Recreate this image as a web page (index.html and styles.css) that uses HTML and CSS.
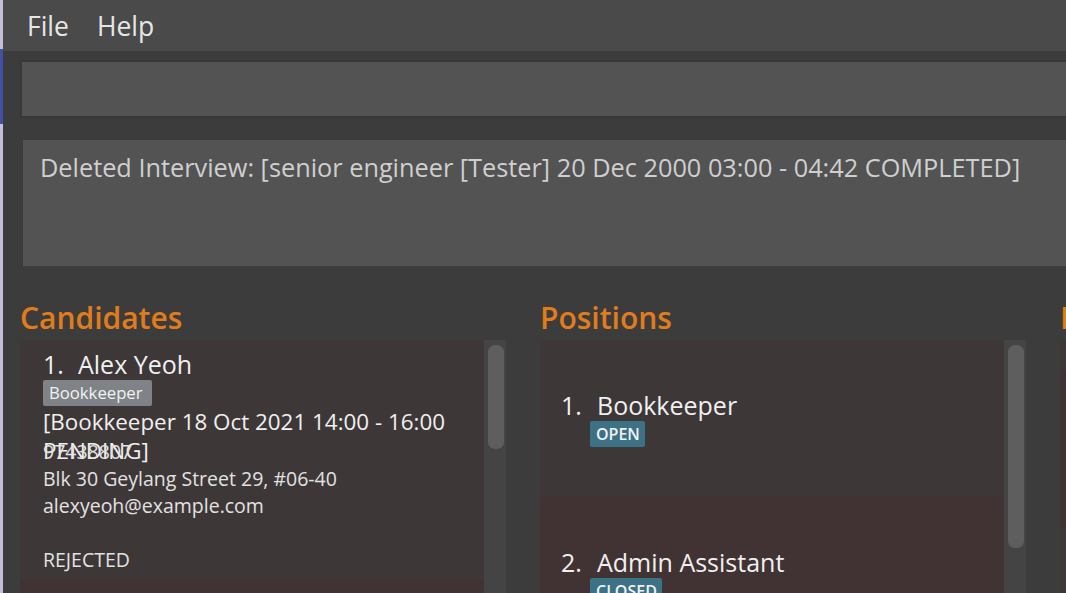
FILE: index.html
```html
<!DOCTYPE html>
<html lang="en">
<head>
<meta charset="utf-8">
<title>HR Manager</title>
<link rel="stylesheet" href="styles.css">
</head>
<body>
<div class="edge"></div>
<div class="app">
  <div class="menubar">
    <span class="menu-item">File</span>
    <span class="menu-item">Help</span>
  </div>
  <div class="cmd"></div>
  <div class="result">Deleted Interview: [senior engineer [Tester] 20 Dec 2000 03:00 - 04:42 COMPLETED]</div>
  <div class="panels">
    <section class="panel">
      <h2 class="panel-title">Candidates</h2>
      <div class="list">
        <div class="cards">
          <div class="card card-odd cand">
            <div class="cand-name"><span class="num num-cand">1.</span><span>Alex Yeoh</span></div>
            <div class="tags"><span class="tag tag-gray">Bookkeeper</span></div>
            <div class="interview">[Bookkeeper 18 Oct 2021 14:00 - 16:00 PENDING]</div>
            <div class="detail">97438807</div>
            <div class="detail">Blk 30 Geylang Street 29, #06-40</div>
            <div class="detail">alexyeoh@example.com</div>
            <div class="detail blank"></div>
            <div class="detail">REJECTED</div>
          </div>
          <div class="card card-even fill"></div>
        </div>
        <div class="track"><div class="thumb thumb-cand"></div></div>
      </div>
    </section>
    <section class="panel">
      <h2 class="panel-title">Positions</h2>
      <div class="list">
        <div class="cards">
          <div class="card card-odd pos">
            <div class="pos-title"><span class="num num-pos">1.</span><span>Bookkeeper</span></div>
            <div class="pos-tags"><span class="tag tag-blue">OPEN</span></div>
          </div>
          <div class="card card-even pos fill">
            <div class="pos-title"><span class="num num-pos">2.</span><span>Admin Assistant</span></div>
            <div class="pos-tags"><span class="tag tag-blue">CLOSED</span></div>
          </div>
        </div>
        <div class="track"><div class="thumb thumb-pos"></div></div>
      </div>
    </section>
    <section class="panel">
      <h2 class="panel-title">Interviews</h2>
      <div class="list">
        <div class="cards">
          <div class="card card-odd short"></div>
          <div class="card card-even mid"></div>
          <div class="card card-odd fill"></div>
        </div>
      </div>
    </section>
  </div>
</div>
</body>
</html>
```

FILE: styles.css
```css
html, body {
  margin: 0;
  padding: 0;
}

body {
  display: flex;
  height: 593px;
  overflow: hidden;
  background: #3c3c3c;
  font-family: "Open Sans", "Noto Sans", sans-serif;
}

.edge {
  flex: none;
  width: 3px;
  background: linear-gradient(#c6bed9 0 49px, #4251a6 49px 124px, #c6bed9 124px);
}

.app {
  flex: none;
  width: 1700px;
  display: flex;
  flex-direction: column;
}

.menubar {
  flex: none;
  height: 51px;
  background: #4a4a4a;
  display: flex;
  align-items: center;
  gap: 28px;
  padding-left: 24px;
}

.menu-item {
  font-size: 26.5px;
  color: #e6e6e6;
  line-height: 36px;
}

.cmd {
  flex: none;
  margin: 9px 0 0 17px;
  height: 54px;
  border: 2px solid #383838;
  background: #535353;
}

.result {
  flex: none;
  margin: 22px 0 0 20px;
  height: 126px;
  box-sizing: border-box;
  padding: 9px 17px;
  background: #535353;
  color: #cfcfcf;
  font-size: 25.3px;
  line-height: 36px;
}

.panels {
  flex: 1;
  min-height: 0;
  display: flex;
  gap: 34px;
  padding-left: 17px;
}

.panel {
  flex: none;
  width: 486px;
  display: flex;
  flex-direction: column;
}

.panel-title {
  margin: 0;
  padding-top: 32px;
  margin-bottom: 2px;
  font-size: 30px;
  font-weight: 600;
  line-height: 40px;
  color: #e27c1b;
}

.list {
  flex: 1;
  min-height: 0;
  display: flex;
}

.cards {
  flex: 1;
  display: flex;
  flex-direction: column;
}

.card {
  box-sizing: border-box;
  flex: none;
}

.card-odd { background: #3d3737; }
.card-even { background: #413333; }
.fill { flex: 1; }
.short { height: 30px; }
.mid { height: 158px; }

.track {
  flex: none;
  width: 22px;
  box-sizing: border-box;
  padding: 5px 2px 0 4px;
  background: #444444;
}

.thumb {
  background: #5e5e5e;
  border-radius: 7px;
}
.thumb-cand { height: 104px; }
.thumb-pos { height: 203px; }

/* candidate card */
.cand {
  height: 241px;
  padding: 9px 0 0 23px;
  color: #f0f0f0;
}

.cand-name, .pos-title {
  display: flex;
  font-size: 25px;
  font-weight: 500;
  line-height: 30px;
  color: #f0f0f0;
}

.num-cand { width: 35px; }
.num-pos { width: 36px; }

.tags {
  margin-top: 1px;
  display: flex;
}

.tag {
  height: 26px;
  line-height: 26px;
  font-size: 16.7px;
  padding: 0 9px 0 6px;
  border-radius: 2px;
  color: #f2f2f2;
}

.tag-gray { background: #7f8286; }
.tag-blue { background: #3d7185; font-weight: 600; font-size: 16px; padding: 0 5px 0 6px; }

.interview {
  margin-top: 1px;
  height: 29px;
  font-size: 22.4px;
  font-weight: 500;
  line-height: 29px;
  max-width: 440px;
}

.detail {
  font-size: 19.5px;
  line-height: 27px;
  height: 27px;
  color: #e2e2e2;
}
.interview + .detail { margin-top: 2px; }

/* position card */
.pos {
  height: 157px;
  padding: 50px 0 0 21px;
}

.pos-tags {
  margin-top: 1px;
  padding-left: 29px;
  display: flex;
}
```
